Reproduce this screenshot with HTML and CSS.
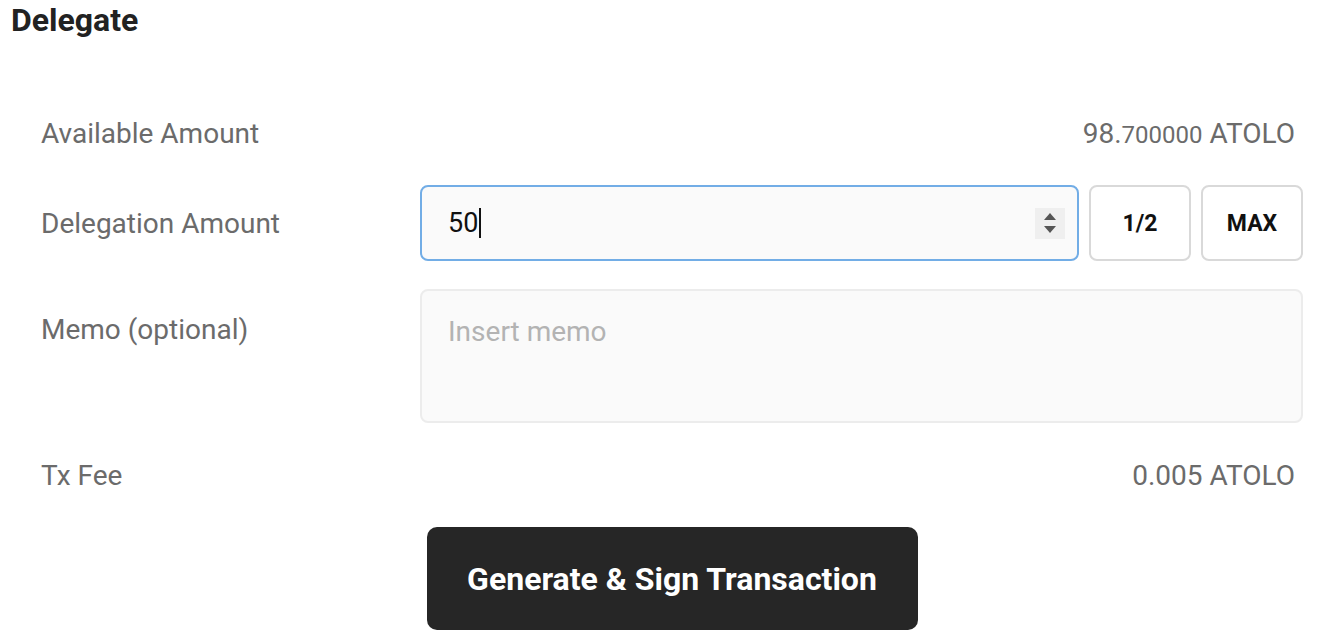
FILE: index.html
```html
<!DOCTYPE html>
<html lang="en">
<head>
  <meta charset="UTF-8">
  <title>Delegate</title>
  <link rel="stylesheet" href="styles.css">
</head>
<body>
  <h2 class="title">Delegate</h2>
  <form class="form">
    <div class="row">
      <div class="label">Available Amount</div>
      <div class="value">98.<span class="decimals">700000</span> ATOLO</div>
    </div>
    <div class="row">
      <div class="label">Delegation Amount</div>
      <div class="amount">
        <div class="input focused">
          <span class="typed">50</span><span class="caret"></span>
          <span class="spinner">
            <svg width="14" height="22" viewBox="0 0 14 22"><path d="M7 1 L13 8 L1 8 Z" fill="#555"/><path d="M1 14 L13 14 L7 21 Z" fill="#555"/></svg>
          </span>
        </div>
        <button type="button" class="btn-small">1/2</button>
        <button type="button" class="btn-small">MAX</button>
      </div>
    </div>
    <div class="row top">
      <div class="label">Memo (optional)</div>
      <div class="memo">Insert memo</div>
    </div>
    <div class="row">
      <div class="label">Tx Fee</div>
      <div class="value">0.005 ATOLO</div>
    </div>
    <div class="actions">
      <button type="button" class="btn-primary">Generate &amp; Sign Transaction</button>
    </div>
  </form>
</body>
</html>
```

FILE: styles.css
```css
:root {
  --text:#222;
  --muted:#6b6b6b;
  --field:#fafafa;
  --line:#d9d9d9;
  --focus:#72ade6;
}
* {box-sizing:border-box;}
html, body {margin:0; padding:0; background:#fff;}
body {
  font-family:Roboto,"Noto Sans",sans-serif;
  color:var(--text);
  padding:0 23px 0 11px;
}
.title {
  margin:0; padding-top:4px;
  font-size:32px; font-weight:700; line-height:32px;
}
.form {
  margin:73px 0 0 30px;
  display:flex; flex-direction:column; gap:28px;
}
.row {
  display:grid; grid-template-columns:379px 1fr;
  align-items:center; min-height:48px;
}
.row.top {align-items:start;}
.row.top .label {padding-top:25px;}
.label {font-size:28px; color:var(--muted); line-height:32px; padding-top:2px;}
.value {
  text-align:right; padding-right:8px; padding-top:2px;
  font-size:28px; color:var(--muted); line-height:32px;
}
.value .decimals {font-size:24px;}
.amount {display:flex; gap:10px; height:76px;}
.input {
  flex:1; display:flex; align-items:center;
  padding:0 12px 0 26px;
  background:var(--field);
  border:2px solid var(--focus); border-radius:8px;
  font-size:27px; color:#111;
}
.caret {width:1.5px; height:30px; background:#111; margin-left:1px;}
.spinner {
  margin-left:auto; width:30px; height:31px;
  display:flex; align-items:center; justify-content:center;
  background:#efefef;
}
.btn-small {
  width:102px; background:#fff;
  border:2px solid var(--line); border-radius:8px;
  font-family:inherit; font-size:23px; font-weight:700; color:#111;
}
.memo {
  height:134px; padding:25px 26px;
  background:var(--field);
  border:2px solid #ececec; border-radius:8px;
  font-size:28px; line-height:32px; color:#b3b3b3;
}
.actions {display:flex; justify-content:center;}
.btn-primary {
  width:491px; height:103px;
  background:#262626; color:#fff;
  border:none; border-radius:10px;
  font-family:inherit; font-size:32px; font-weight:700;
}
```
